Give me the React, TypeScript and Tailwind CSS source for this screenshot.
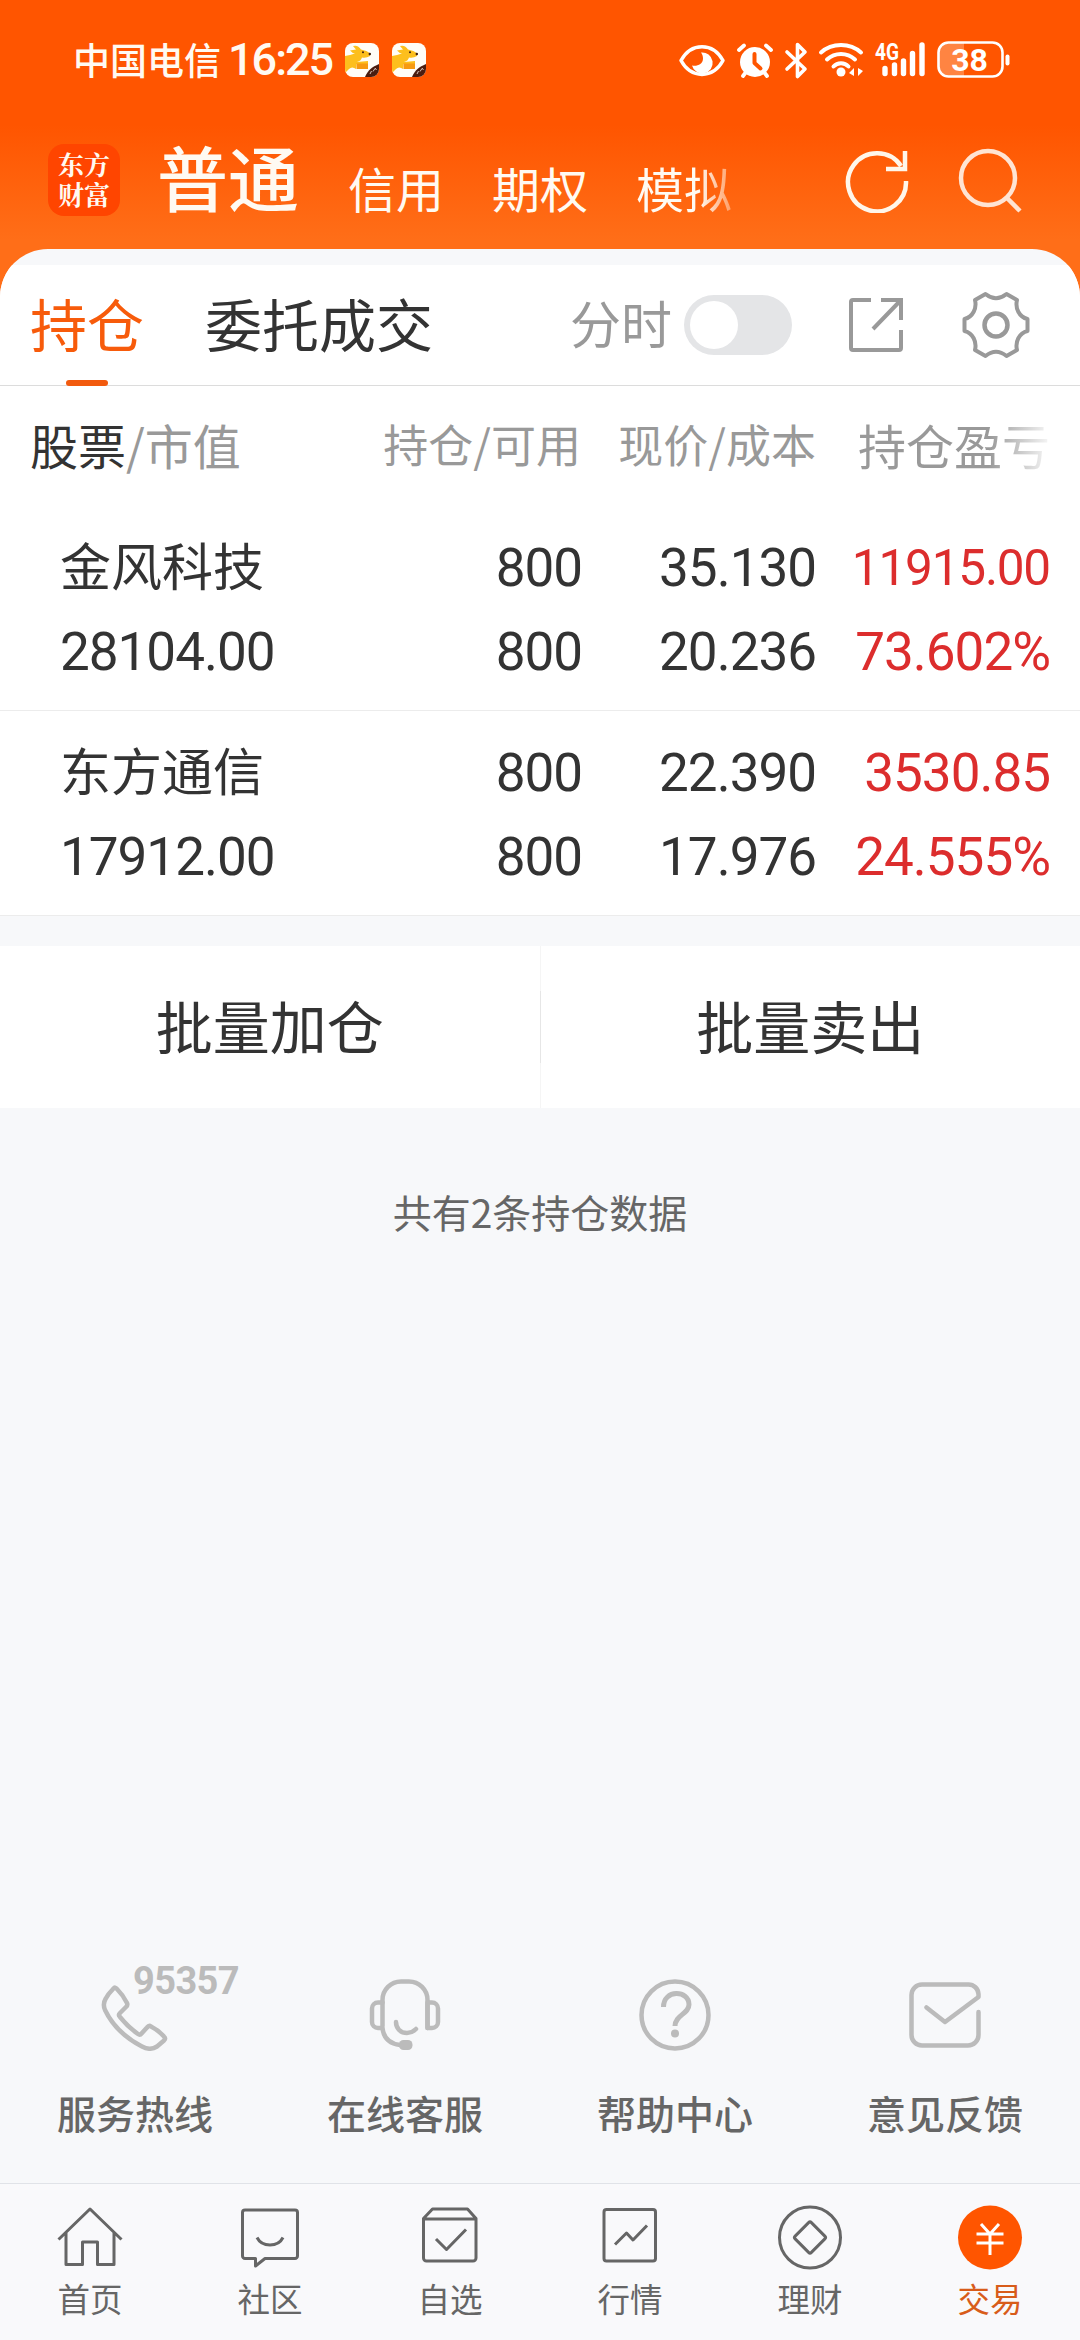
import type { ReactNode } from "react";

const services = [
  { label: "服务热线", icon: <HotlineIcon /> },
  { label: "在线客服", icon: <HeadsetIcon /> },
  { label: "帮助中心", icon: <HelpIcon /> },
  { label: "意见反馈", icon: <FeedbackIcon /> },
];

const navItems = [
  { label: "首页", icon: <HomeIcon />, active: false },
  { label: "社区", icon: <CommunityIcon />, active: false },
  { label: "自选", icon: <WatchlistIcon />, active: false },
  { label: "行情", icon: <MarketIcon />, active: false },
  { label: "理财", icon: <WealthIcon />, active: false },
  { label: "交易", icon: <TradeIcon />, active: true },
];

const holdings = [
  {
    name: "金风科技",
    value: "28104.00",
    held: "800",
    available: "800",
    price: "35.130",
    cost: "20.236",
    profit: "11915.00",
    rate: "73.602%",
    small: true,
  },
  {
    name: "东方通信",
    value: "17912.00",
    held: "800",
    available: "800",
    price: "22.390",
    cost: "17.976",
    profit: "3530.85",
    rate: "24.555%",
    small: false,
  },
];

function AppBadge() {
  return (
    <svg width="34" height="34" viewBox="0 0 34 34">
      <defs>
        <clipPath id="badge">
          <rect width="34" height="34" rx="8" />
        </clipPath>
      </defs>
      <g clipPath="url(#badge)">
        <rect width="34" height="34" fill="#fffdf8" />
        <path
          d="M5 7.500L11 6.500 8 3Q13 1.500 16 6.500Q22 7.500 25.500 10.500L25 13Q21 15.500 17 14.500Q16 18 12 19L23 18V21H11.500L11 26Q7 23 4 26L0 30V13Q5 12 10 10.500Q7 10 5 7.500Z"
          fill="#fdbf1d"
        />
        <path d="M11.500 20.500h11.500v5.500H11.500z" fill="#f79a10" />
        <circle cx="18" cy="9.200" r="1" fill="#3b1c10" />
        <circle cx="24.800" cy="11" r="1.200" fill="#3b1c10" />
        <path d="M34 21v13H20c3-7 7-10 14-13z" fill="#4b1d10" />
        <path d="M25 31l1.500-3M28 28.500l2-3M30 25l1.500 2" stroke="#d9c2b8" strokeWidth="1" />
      </g>
    </svg>
  );
}

function StatusIcons() {
  return (
    <svg
      className="overflow-visible"
      width="340"
      height="60"
      viewBox="675 30 340 60"
      fill="none"
      stroke="#fff"
      strokeLinecap="round"
      strokeLinejoin="round"
    >
      {/* eye comfort */}
      <path d="M680 60.500C690 42 712 42 722 60.500C712 79 690 79 680 60.500Z" strokeWidth="3.500" />
      <path d="M700 52.500a10.500 10.500 0 1 1-9 13c5 1 11-1 11-7 0-2-.5-4-2-6z" fill="#fff" stroke="none" />
      {/* alarm */}
      <circle cx="754" cy="62" r="15" fill="#fff" stroke="none" />
      <path d="M738 50l5-4.500M770 50l-5-4.500M745 72l-3 4M763 72l3 4" strokeWidth="3.800" />
      <path d="M753.500 54v9l6 5.500" stroke="#ff5500" strokeWidth="4" />
      {/* bluetooth */}
      <path d="M786 52l18 17-7.500 7.500V44.500l7.500 7.500-18 17" strokeWidth="3.600" />
      {/* wifi */}
      <path d="M820 52.500c11-10 29-10 40 0M826 59.500c8-7.500 20-7.500 28 0M832.500 66.500c4-4.500 11-4.500 15 0" strokeWidth="4" />
      <circle cx="840" cy="72" r="4.500" fill="#fff" stroke="none" />
      <path d="M848 73l5-5v8zM862 71l-5 5v-8z" fill="#fff" stroke="none" />
      {/* signal */}
      <path d="M884 68.500v5M893.500 65v8.500M902.500 61v12.500M911.500 53.500v20M921 45v28.500" strokeWidth="5.400" />
      <text x="874" y="59.500" fill="#fff" stroke="none" fontFamily="Roboto, sans-serif" fontSize="23" fontWeight="700" textLength="24" lengthAdjust="spacingAndGlyphs">
        4G
      </text>
      {/* battery */}
      <path d="M947 42.500h16v34h-16a9 9 0 0 1-9-9v-16a9 9 0 0 1 9-9z" fill="#ff8442" stroke="none" />
      <rect x="937.500" y="42.500" width="64" height="34" rx="10" strokeWidth="2.600" />
      <path d="M1006.500 56.500v7" strokeWidth="4" />
      <text x="968.500" y="70.500" fill="#fff" stroke="none" fontFamily="Roboto, sans-serif" fontSize="32" fontWeight="700" textAnchor="middle">
        38
      </text>
    </svg>
  );
}

function RefreshIcon() {
  return (
    <svg width="66" height="66" viewBox="0 0 66 66" fill="none" stroke="#fff6ea" strokeWidth="4.500">
      <path d="M61 34A29 29 0 1 1 56 19" />
      <path d="M60 4v18H41" />
    </svg>
  );
}

function SearchIcon() {
  return (
    <svg width="66" height="66" viewBox="0 0 66 66" fill="none" stroke="#ffe4d3" strokeWidth="4.500">
      <circle cx="30" cy="31" r="27" />
      <path d="M48 50l14 14" />
    </svg>
  );
}

function ExportIcon() {
  return (
    <svg width="56" height="56" viewBox="0 0 56 56" fill="none" stroke="#999" strokeWidth="4" strokeLinejoin="round">
      <path d="M23 3H5a2 2 0 0 0-2 2v46a2 2 0 0 0 2 2h46a2 2 0 0 0 2-2V33" />
      <path d="M33 3h20v20M53 3L25 32" strokeLinejoin="miter" />
    </svg>
  );
}

function GearIcon() {
  return (
    <svg width="68" height="68" viewBox="0 0 68 68" fill="none" stroke="#999" strokeWidth="4" strokeLinejoin="round">
      <path d="M23.500 3Q34 11.500 44.500 3L55 9C53 17 57 26 65.500 28V40C57 42 53 51 55 59L44.500 65Q34 56.500 23.500 65L13 59C15 51 11 42 2.500 40V28C11 26 15 17 13 9Z" />
      <circle cx="34" cy="34" r="11.500" strokeWidth="4.500" />
    </svg>
  );
}

function HotlineIcon() {
  return (
    <div className="relative">
      <svg width="72" height="72" viewBox="0 0 72 72" fill="none" stroke="#bbb" strokeWidth="4.500" strokeLinejoin="round">
        <path d="M14.500 9.500Q16 7.500 18 10Q24 16 28 24Q29 26 27 28L21 34Q19 36 21 38Q29 48 39 55Q41 56.500 43 54L48 48.500Q50 46 52 47.500Q59 51 65 57.500Q67 59.500 65 61.500L58 67.500Q51 72 43 67.500Q17 54 6 31Q3.500 25 6.500 20Q9 15 14.500 9.500Z" />
      </svg>
      <span className="absolute -top-[18px] left-[34px] font-['Roboto','Liberation_Sans',sans-serif] text-[38px]/[40px] font-bold tracking-[-0.6px] text-[#bbb]">
        95357
      </span>
    </div>
  );
}

function HeadsetIcon() {
  return (
    <svg width="72" height="72" viewBox="0 0 72 72" fill="none" stroke="#bbb" strokeWidth="4.500" strokeLinejoin="round" strokeLinecap="round">
      <path d="M13.500 47V21a18.500 18.500 0 0 1 18.500-18.500h8A18.500 18.500 0 0 1 58.500 21V49" />
      <path d="M13.500 23.500H9a6 6 0 0 0-6 6V43a6 6 0 0 0 6 6h4.500Q15 64 31 66" />
      <path d="M58.500 23.500H63a6 6 0 0 1 6 6V43a6 6 0 0 1-6 6h-4.500z" />
      <path d="M27 43c0 6 4 11 11 11 4 0 7-2 9-4" />
      <rect x="30" y="61" width="13.500" height="10" rx="4.500" fill="#bbb" stroke="none" />
    </svg>
  );
}

function HelpIcon() {
  return (
    <svg width="72" height="72" viewBox="0 0 72 72" fill="none" stroke="#bbb" strokeWidth="4.500">
      <circle cx="36" cy="36" r="33.500" />
      <path d="M24.500 28C24.500 10 50 11 50 25.500C50 35 36 36 36 47" strokeWidth="5" />
      <circle cx="36" cy="54.500" r="4" fill="#bbb" stroke="none" />
    </svg>
  );
}

function FeedbackIcon() {
  return (
    <svg width="72" height="72" viewBox="0 0 72 72" fill="none" stroke="#bbb" strokeWidth="4.500" strokeLinejoin="round" strokeLinecap="round">
      <path d="M17.500 28.500L36 43L69.500 18V15A10 10 0 0 0 59.500 5.500H13A10.500 10.500 0 0 0 2.500 16V56A10.500 10.500 0 0 0 13 66.500H59A10.500 10.500 0 0 0 69.500 56V33" />
    </svg>
  );
}

function NavSvg({ children }: { children: ReactNode }) {
  return (
    <svg width="68" height="68" viewBox="0 0 68 68" fill="none" stroke="#666" strokeWidth="3" strokeLinejoin="round">
      {children}
    </svg>
  );
}

function HomeIcon() {
  return (
    <NavSvg>
      <path d="M2.500 35.500L34 5L65.500 35.500M10 29V60.500H26.500V38H41.500V60.500H58V29" />
    </NavSvg>
  );
}

function CommunityIcon() {
  return (
    <NavSvg>
      <path d="M9 6H59A2.500 2.500 0 0 1 61.500 8.500V52A2.500 2.500 0 0 1 59 54.500H29L19.500 62V54.500H9A2.500 2.500 0 0 1 6.500 52V8.500A2.500 2.500 0 0 1 9 6" />
      <path d="M21 33.500c5 10 21 10 26 0" />
    </NavSvg>
  );
}

function WatchlistIcon() {
  return (
    <NavSvg>
      <path d="M7.500 14.500V54A3 3 0 0 0 10.500 57H57A3 3 0 0 0 60 54V14.500L51.500 5H16.500ZM7.500 15H60" />
      <path d="M20 35l10.500 10.500L50 25.500" />
    </NavSvg>
  );
}

function MarketIcon() {
  return (
    <NavSvg>
      <rect x="8" y="5.500" width="51.500" height="51.500" rx="2.500" />
      <path d="M19 40.500L30.500 29L37 36L51 21.500" />
    </NavSvg>
  );
}

function WealthIcon() {
  return (
    <NavSvg>
      <circle cx="34" cy="33.500" r="30.500" />
      <rect x="22.500" y="22" width="23" height="23" rx="2" transform="rotate(45 34 33.500)" />
    </NavSvg>
  );
}

function TradeIcon() {
  return (
    <NavSvg>
      <circle cx="34" cy="33.500" r="32" fill="#ff5500" stroke="none" />
      <path d="M25 20l9 10 9-10M34 30v21M20.500 30h27M20.500 39h27" stroke="#fff" />
    </NavSvg>
  );
}

function Header() {
  return (
    <header className="h-[297px] bg-[linear-gradient(#ff5500_0px,#ff5500_125px,#ff6e18_240px)] text-[#fffaf2]">
      <div className="flex h-[120px] items-center pl-[73px]">
        <span className="text-[37px] font-medium">中国电信</span>
        <span className="ml-[7px] w-[117px] font-['Roboto',sans-serif] text-[45px] font-medium tracking-[-2px]">16:25</span>
        <div className="flex gap-[13px]">
          <AppBadge />
          <AppBadge />
        </div>
        <div className="mr-[64px] ml-auto">
          <StatusIcons />
        </div>
      </div>
      <div className="flex h-[120px] items-center pl-[48px]">
        <div className="h-[72px] w-[72px] rounded-[16px] bg-[#ff4500] pt-[5px] text-center font-['Noto_Serif_CJK_SC','Noto_Sans_CJK_SC',serif] text-[26px]/[30px] font-bold">
          东方
          <br />
          财富
        </div>
        <div className="ml-[37px] flex items-end pb-[10px]">
          <span className="text-[71px]/[100px] font-medium">普通</span>
          <div className="mb-[3px] ml-[49px] flex gap-[48px] text-[48px]/[70px]">
            <span>信用</span>
            <span>期权</span>
            <span className="bg-[linear-gradient(90deg,#fffaf2_65%,#ff9c62_100%)] bg-clip-text text-transparent">模拟</span>
          </div>
        </div>
        <div className="mr-[56px] ml-auto flex gap-[47px]">
          <RefreshIcon />
          <SearchIcon />
        </div>
      </div>
    </header>
  );
}

function TabBar() {
  return (
    <div className="flex h-[121px] items-center border-b border-[#dcdcdc] bg-white pl-[30px] text-[57px]">
      <div className="relative pb-[5px] text-[#f75b0b]">
        持仓
        <span className="absolute -bottom-[16px] left-[36px] h-[6px] w-[42px] rounded-full bg-[#f25a0e]" />
      </div>
      <span className="ml-[61px] pb-[5px]">委托成交</span>
      <span className="ml-auto pb-[5px] text-[51px] text-[#999]">分时</span>
      <div className="ml-[12px] h-[60px] w-[108px] rounded-full bg-[#e4e5e7] p-[6px]">
        <div className="h-[48px] w-[48px] rounded-full bg-white" />
      </div>
      <div className="mr-[50px] ml-[56px] flex items-center gap-[58px]">
        <ExportIcon />
        <GearIcon />
      </div>
    </div>
  );
}

function HoldingsTable() {
  return (
    <section className="bg-white">
      <div className="flex h-[120px] items-center pb-[5px] text-[45px] text-[#999]">
        <div className="w-[281px] pl-[30px] text-[48px]">
          <span className="text-[#333]">股票</span>/市值
        </div>
        <div className="w-[300px] text-right">持仓/可用</div>
        <div className="w-[235px] text-right">现价/成本</div>
        <div className="ml-[42px] bg-[linear-gradient(90deg,#999_68%,#f7f7f7_100%)] bg-clip-text text-[48px] text-transparent">
          持仓盈亏
        </div>
      </div>
      {holdings.map((row) => (
        <div
          key={row.name}
          className="flex h-[205px] border-b border-[#ececec] pt-[20px] font-['Roboto','Noto_Sans_CJK_SC',sans-serif] text-[53px]/[84px] tracking-[-1px]"
        >
          <div className="w-[282px] pl-[60px]">
            <div className="h-[84px] pt-px text-[51px] tracking-normal">{row.name}</div>
            <div>{row.value}</div>
          </div>
          <div className="w-[300px] text-right">
            <div>{row.held}</div>
            <div>{row.available}</div>
          </div>
          <div className="w-[234px] text-right">
            <div>{row.price}</div>
            <div>{row.cost}</div>
          </div>
          <div className="w-[234px] text-right text-[#dc2d2d]">
            <div className={row.small ? "text-[49.5px] tracking-[-1.2px]" : ""}>{row.profit}</div>
            <div>{row.rate}</div>
          </div>
        </div>
      ))}
    </section>
  );
}

export default function App() {
  return (
    <main className="flex h-[2340px] w-[1080px] flex-col overflow-hidden bg-[#f7f8fa] font-['Noto_Sans_CJK_SC',sans-serif] text-[#333]">
      <Header />
      <div className="-mt-[48px] overflow-hidden rounded-t-[48px] bg-[#f7f8fa] pt-[16px]">
        <TabBar />
        <HoldingsTable />
      </div>
      <div className="mt-[30px] flex h-[162px] items-center bg-white text-[57px]">
        <div className="flex-1 pb-[5px] text-center">批量加仓</div>
        <div className="flex h-full w-px items-center bg-[#f5f5f5]">
          <div className="h-[72px] w-px bg-[#e6e6e6]" />
        </div>
        <div className="flex-1 pb-[5px] text-center">批量卖出</div>
      </div>
      <p className="mt-[73px] text-center text-[39px]/[60px] text-[#666]">共有2条持仓数据</p>

      <div className="mt-auto grid h-[204px] grid-cols-4">
        {services.map((item) => (
          <div key={item.label} className="flex flex-col items-center">
            {item.icon}
            <span className="mt-[31px] text-[39px]/[60px] font-medium text-[#666]">{item.label}</span>
          </div>
        ))}
      </div>
      <nav className="grid h-[157px] grid-cols-6 border-t border-[#e0e3e8] bg-[#f9f9fb] pt-[20px]">
        {navItems.map((item) => (
          <div key={item.label} className="flex flex-col items-center">
            {item.icon}
            <span className={item.active ? "mt-[6px] text-[32.5px]/[40px] text-[#d85c1a]" : "mt-[6px] text-[32.5px]/[40px] text-[#666]"}>
              {item.label}
            </span>
          </div>
        ))}
      </nav>
    </main>
  );
}
